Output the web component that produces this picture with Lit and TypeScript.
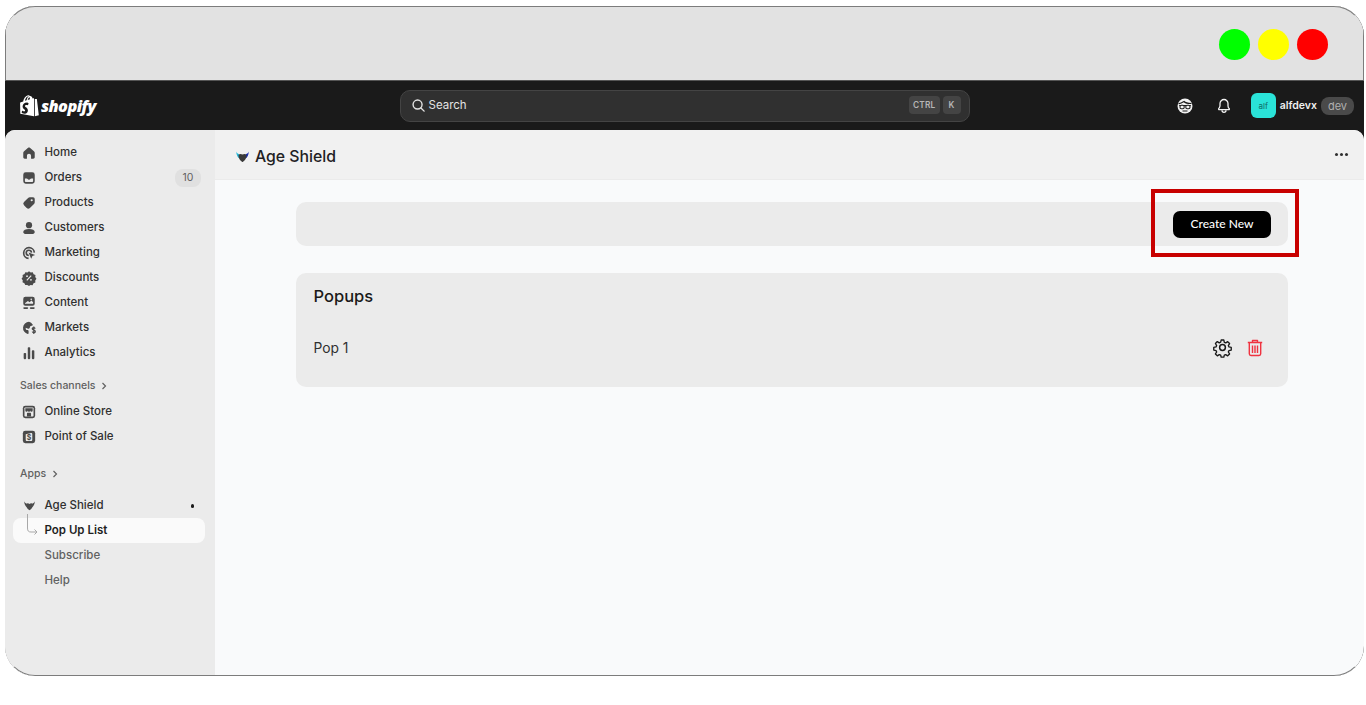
import { LitElement, html, css, svg } from "lit";
import { customElement } from "lit/decorators.js";

const I = "#4a4a4a";
const icons: Record<string, unknown> = {
  home: svg`<path fill="${I}" d="M10 3.200c-.4 0-.8.15-1.100.4L4 7.800c-.6.5-1 1.200-1 2v5.400C3 16.200 3.800 17 4.800 17h2.700v-3.600c0-1.400 1.100-2.500 2.500-2.500s2.500 1.100 2.500 2.500V17h2.700c1 0 1.800-.8 1.800-1.800V9.800c0-.8-.4-1.500-1-2l-4.900-4.200c-.3-.25-.7-.4-1.100-.4z"/>`,
  orders: svg`<path fill="${I}" fill-rule="evenodd" d="M6 3h8a3 3 0 0 1 3 3v8a3 3 0 0 1-3 3H6a3 3 0 0 1-3-3V6a3 3 0 0 1 3-3zM5 10.500V14c0 .6.4 1 1 1h8c.6 0 1-.4 1-1v-3.500h-2.300c-.5 0-.9.300-1.100.7-.2.500-.8.800-1.600.8s-1.400-.3-1.600-.8c-.2-.4-.6-.7-1.100-.7H5z"/>`,
  products: svg`<path fill="${I}" fill-rule="evenodd" d="M11 3h4a2 2 0 0 1 2 2v4c0 .8-.3 1.500-.9 2.100l-5 5a2.800 2.800 0 0 1-3.900 0l-3.300-3.300a2.800 2.800 0 0 1 0-3.900l5-5C9.500 3.300 10.200 3 11 3zM13.300 8a1.300 1.300 0 1 0 0-2.600 1.300 1.300 0 0 0 0 2.600z"/>`,
  customers: svg`<circle cx="10" cy="6.500" r="3.800" fill="${I}"/><path fill="${I}" d="M3 15c0-2.200 2.800-3.700 7-3.700s7 1.500 7 3.700c0 1.300-1 2.300-2.300 2.300H5.300C4 17.300 3 16.300 3 15z"/>`,
  marketing: svg`<g fill="none" stroke="${I}" stroke-width="2"><path d="M9.500 16.500a6.500 6.500 0 1 1 7-7"/><path d="M9.800 13a3.200 3.200 0 1 1 3.200-3.400"/></g><path fill="${I}" d="M9.500 9.500l8 2.800-3.300 1.500-1.500 3.300z"/>`,
  discounts: svg`<path fill="${I}" d="M10 1.800l2.100 1.500 2.500-.3 1 2.300 2.300 1.100-.3 2.500 1.500 1.900-1.500 2.100.2 2.500-2.300 1-1.100 2.300-2.500-.3-1.900 1.500-2.100-1.500-2.500.2-1-2.300-2.300-1.100.3-2.500-1.500-1.900 1.500-2.100-.2-2.500 2.300-1 1.100-2.300 2.500.3z"/><path stroke="#ebebeb" stroke-width="1.400" d="M7.300 13l5.400-6"/><circle cx="7.600" cy="7.800" r="1.100" fill="#ebebeb"/><circle cx="12.400" cy="12.200" r="1.100" fill="#ebebeb"/>`,
  content: svg`<path fill="${I}" fill-rule="evenodd" d="M5.500 2.500h9A2.500 2.500 0 0 1 17 5v6a2.500 2.500 0 0 1-2.500 2.500h-9A2.500 2.500 0 0 1 3 11V5a2.500 2.500 0 0 1 2.500-2.500zM5 10.300c0 .4.300.7.700.7h8.600c.4 0 .7-.3.700-.7V9l-2-2-2.300 2-2-1.500z"/><circle cx="12.700" cy="5.500" r="1" fill="#ebebeb"/><rect x="3" y="15.200" width="6" height="2" rx="1" fill="${I}"/><rect x="11" y="15.200" width="6" height="2" rx="1" fill="${I}"/>`,
  markets: svg`<path fill="${I}" d="M10 2.500a7.500 7.500 0 0 0-1.500 14.800c.6.100 1-.3 1-.8V14c0-.8-.7-1.500-1.500-1.500-1.100 0-2-.9-2-2V9.800l3 1c1 .3 2-.3 2-1.300 0-.8.5-1.500 1.200-1.800l2-.9c.4-.2.600-.7.300-1.100A7.500 7.500 0 0 0 10 2.500z"/><path fill="none" stroke="${I}" stroke-width="1.500" d="M17.500 10.800c-.3-.8-1-1.300-1.800-1.300-1 0-1.800.6-1.800 1.500 0 2 3.800 1.200 3.800 3.200 0 .9-.9 1.500-1.900 1.500-.9 0-1.600-.5-1.900-1.300M15.800 8.300v9"/>`,
  analytics: svg`<rect x="3.500" y="10" width="3" height="7.500" rx="1" fill="${I}"/><rect x="8.500" y="3" width="3" height="14.500" rx="1" fill="${I}"/><rect x="13.500" y="6.500" width="3" height="11" rx="1" fill="${I}"/>`,
  store: svg`<rect x="2.500" y="2.500" width="15" height="15" rx="3" fill="${I}"/><rect x="4.500" y="4.500" width="11" height="11" rx="1" fill="#ebebeb"/><path fill="${I}" d="M5.500 5.500h9v2.800a1.500 1.500 0 0 1-3 0 1.500 1.500 0 0 1-3 0 1.500 1.500 0 0 1-3 0z"/><path fill="${I}" d="M7.500 15.500v-3.500a1 1 0 0 1 1-1h3a1 1 0 0 1 1 1v3.500z"/>`,
  pos: svg`<rect x="2.500" y="2.500" width="15" height="15" rx="3" fill="${I}"/><path fill="#ebebeb" d="M6 6.500l6.500-1.500c1 0 1.500.5 1.500 1.500v7c0 1-.5 1.500-1.500 1.500h-5C6.500 15 6 14.500 6 13.500z"/><text x="10" y="13.400" text-anchor="middle" font-size="8.500" font-weight="700" font-family="Inter" fill="${I}">$</text>`,
};

const navIcon = (k: string) => html`<svg class="ni" viewBox="0 0 20 20">${icons[k]}</svg>`;
const shield = (l: string, r: string, c: string) => html`<svg viewBox="0 0 14 12" class="sh">
  <path fill="${l}" d="M.300 .300C.800 1.800 1.800 2.800 3.500 3.300L3.800 8C1.500 6.500 .300 3.800 .300 .300z"/>
  <path fill="${r}" d="M13.700 .300C13.200 1.800 12.200 2.800 10.500 3.300L10.200 8c2.300-1.500 3.500-4.200 3.500-7.700z"/>
  <path fill="${c}" d="M7 3.700C8.500 2.500 10.500 2.800 11.300 4c.3 3.500-1.600 6.300-4.300 7.800C4.300 10.300 2.400 7.500 2.700 4 3.500 2.800 5.500 2.500 7 3.700z"/></svg>`;
const chevron = html`<svg width="8" height="8" viewBox="0 0 8 8" fill="none" stroke="#616161" stroke-width="1.200"><path d="M2.500 1l3 3-3 3"/></svg>`;

@customElement("app-root")
export class AppRoot extends LitElement {
  static styles = css`
    :host { display: block; position: relative; height: 705px; background: #fff; font-family: Inter, "Liberation Sans", sans-serif; overflow: hidden; }
    svg { display: block; flex: none; }
    .frame { position: absolute; left: 5px; top: 6px; width: 1359px; height: 670px; border-radius: 30px; overflow: hidden; display: flex; flex-direction: column; background: #1a1a1a; }
    .frame::after { content: ""; position: absolute; inset: 0; box-sizing: border-box; border: 1px solid #7c7c7c; border-left-color: transparent; border-right-color: transparent; border-radius: 30px; pointer-events: none; }
    .chrome { height: 75px; box-sizing: border-box; flex: none; background: #e2e2e2; display: flex; align-items: center; justify-content: flex-end; gap: 8px; padding: 3px 35px 0 0; border: 1px solid #7c7c7c; border-width: 0 1px 1px; border-bottom-color: #555; }
    .dot { width: 31px; height: 31px; border-radius: 50%; }
    .top { height: 49px; flex: none; display: grid; grid-template-columns: 1fr 570px 1fr; align-items: center; background: #1a1a1a; }
    .logo { display: flex; align-items: center; gap: 2px; padding-left: 15px; color: #fff; }
    .logo span { font: italic 800 16.300px "Open Sans", sans-serif; letter-spacing: -0.6px; }
    .search { height: 32px; box-sizing: border-box; background: #303030; border: 1px solid #444; border-radius: 10px; display: flex; align-items: center; padding: 0 8px 1px 10px; color: #e3e3e3; font-size: 11.500px; gap: 3px; }
    .grow { flex: 1; }
    .kbd { background: #444; color: #b5b5b5; font-size: 8.300px; font-weight: 600; height: 18px; border-radius: 4px; padding: 0 4px; display: flex; align-items: center; letter-spacing: .2px; }
    .kbd.k { width: 18px; box-sizing: border-box; justify-content: center; padding: 0; }
    .right { display: flex; justify-content: flex-end; align-items: center; color: #fff; padding-right: 10px; }
    .avatar { width: 25px; height: 25px; background: #2ae3d8; border-radius: 6px; color: #0e6a66; font-size: 8px; display: flex; align-items: center; justify-content: center; margin-left: 19px; }
    .user { font-size: 10.500px; font-weight: 600; margin: 0 4px; color: #f0f0f0; }
    .env { background: #4a4a4a; color: #b0b0b0; font-size: 11px; height: 18px; width: 33px; border-radius: 8px; display: flex; align-items: center; justify-content: center; }
    .bell { margin-left: 23px; }
    .body { flex: 1; display: flex; min-height: 0; border-radius: 10px 10px 0 0; overflow: hidden; background: #f9fafb; }
    .side { width: 210px; flex: none; background: #ebebeb; box-sizing: border-box; padding: 10px 10px 0 8px; color: #303030; font-size: 11.500px; font-weight: 500; }
    .item { height: 25px; box-sizing: border-box; padding-bottom: 1px; display: flex; align-items: center; border-radius: 8px; position: relative; padding-left: 6px; }
    .ni { width: 20px; height: 20px; margin-right: 5.500px; margin-top: 1px; transform: scale(.82); }
    .item .pad { width: 25.500px; flex: none; display: flex; align-items: center; }
    .badge { margin-left: auto; margin-right: 4px; margin-top: 1px; width: 26px; height: 18px; background: #e0e0e0; border-radius: 8px; font-size: 10.500px; color: #616161; display: flex; align-items: center; justify-content: center; font-weight: 400; }
    .sec { height: 25px; display: flex; align-items: center; gap: 5px; color: #616161; font-size: 10.500px; padding-left: 7px; font-weight: 500; }
    .s1 { margin-top: 8px; margin-bottom: 1px; }
    .s2 { margin-top: 12px; margin-bottom: 7px; }
    .sel { background: #fafafa; font-weight: 600; color: #1f1f1f; }
    .sub { color: #616161; }
    .sh { width: 13px; height: 11.500px; }
    .side .sh { width: 11px; height: 9.500px; margin-left: 5px; margin-top: 2px; }
    .pin { width: 3.500px; height: 3.500px; background: #1a1a1a; border-radius: 50%; margin-left: auto; margin-right: 11px; margin-top: 2px; }
    .hook { position: absolute; left: 5px; top: -4px; width: 22px; height: 26px; }
    .main { flex: 1; min-width: 0; display: flex; flex-direction: column; }
    .bar { height: 50px; box-sizing: border-box; background: #f1f1f1; border-bottom: 1px solid #ebebeb; display: flex; align-items: center; padding: 4px 16px 0 21px; font-size: 15.800px; font-weight: 500; color: #1f2124; gap: 6px; flex: none; }
    .more { margin-left: auto; display: flex; gap: 2px; margin-top: -4px; }
    .more i { width: 3px; height: 3px; border-radius: 50%; background: #303030; }
    .cnt { padding: 22px 76px 0 81px; display: flex; flex-direction: column; gap: 27px; }
    .card { background: #ebebeb; border-radius: 10px; }
    .act { height: 44px; display: flex; align-items: center; justify-content: flex-end; padding-right: 17px; }
    .btn { width: 98px; height: 27px; background: #000; color: #fff; border: 0; border-radius: 7px; font: 500 12px Lato, sans-serif; padding: 0 0 2px; }
    .pops { height: 114px; box-sizing: border-box; padding: 12px 23.500px 0 17.500px; }
    .pops h2 { margin: 0; font-size: 16.500px; font-weight: 500; color: #1a1a1a; line-height: 22px; }
    .row { display: flex; align-items: center; height: 30px; margin-top: 26px; font-size: 13.800px; color: #303030; gap: 12px; }
    .row span { margin-right: auto; }
    .row svg { margin-top: -1px; }
    .mark { position: absolute; left: 1151px; top: 189px; width: 148px; height: 68px; box-sizing: border-box; border: 4px solid #c80000; pointer-events: none; }
  `;

  private nav(k: string, t: string, extra?: unknown) {
    return html`<div class="item">${navIcon(k)}<span>${t}</span>${extra ?? ""}</div>`;
  }

  render() {
    return html`
      <div class="frame">
        <div class="chrome">
          <div class="dot" style="background:#0f0"></div>
          <div class="dot" style="background:#ff0"></div>
          <div class="dot" style="background:#f00"></div>
        </div>
        <div class="top">
          <div class="logo">
            <svg width="19" height="22" viewBox="0 0 19 22"><path fill="#fff" d="M13.300 3.300l-.7.200C12.200 2.300 11.500 1 10.100 1h-.2C9.500.500 9 .3 8.600.3 5.300.3 3.700 4.400 3.200 6.500l-2.300.7c-.7.200-.7.200-.8.900L.3 18.700 14 21.300V3.200c-.3 0-.5 0-.7.100zM9.900 4.300L7.700 5c.4-1.600 1.200-2.400 1.900-2.700.2.500.3 1.100.3 2zM8.600 1.200c.1 0 .3 0 .4.100-1 .5-2 1.600-2.400 3.900l-1.700.5C5.300 4.200 6.400 1.200 8.600 1.200zM14.800 21.200l4-1-1.900-15.900c0-.1-.1-.2-.2-.2l-1.900-.1z"/><path fill="#1a1a1a" d="M8.600 8.200l-.7 2.200s-.7-.4-1.600-.4c-1.300 0-1.400.8-1.400 1 0 1.100 3 1.600 3 4.300 0 2.100-1.300 3.400-3.100 3.400-2.100 0-3.200-1.300-3.200-1.300l.6-1.900s1.100.9 2 .9c.6 0 .9-.5.900-.8 0-1.500-2.500-1.600-2.500-4.100 0-2.100 1.500-4.100 4.500-4.100 1.200 0 1.500.8 1.500.8z"/></svg>
            <span>shopify</span>
          </div>
          <div class="search">
            <svg width="15" height="15" viewBox="0 0 16 16" fill="none" stroke="#e3e3e3" stroke-width="1.500" stroke-linecap="round"><circle cx="7" cy="7" r="4.800"/><path d="M10.600 10.600L14 14"/></svg>
            <span>Search</span><span class="grow"></span>
            <span class="kbd">CTRL</span><span class="kbd k">K</span>
          </div>
          <div class="right">
            <svg width="16" height="16" viewBox="0 0 16 16"><circle cx="8" cy="8" r="7.500" fill="#f2f2f2"/><path d="M1.500 5.500C4 5.800 5.500 4.500 7 3.500c1 1.200 4 2 7.500 2" stroke="#1a1a1a" stroke-width="1.200" fill="none"/><rect x="2.200" y="7" width="11.600" height="1.100" fill="#1a1a1a"/><rect x="3" y="7.300" width="4.200" height="3.400" rx="1.400" fill="#f2f2f2" stroke="#1a1a1a" stroke-width="1.100"/><rect x="8.800" y="7.300" width="4.200" height="3.400" rx="1.400" fill="#f2f2f2" stroke="#1a1a1a" stroke-width="1.100"/><path d="M5.500 13h5" stroke="#1a1a1a" stroke-width="1"/></svg>
            <svg class="bell" width="16" height="16" viewBox="0 0 16 16" fill="none" stroke="#f2f2f2" stroke-width="1.300" stroke-linejoin="round"><path d="M8 1.500a4 4 0 0 0-4 4v2.300c0 1-.5 1.900-1.300 2.900-.3.500 0 1 .6 1h9.400c.6 0 .9-.5.600-1C12 9.700 12 8.800 12 7.800V5.500a4 4 0 0 0-4-4z"/><path d="M6 12.300a2 2 0 0 0 4 0"/></svg>
            <div class="avatar">alf</div>
            <span class="user">alfdevx</span>
            <span class="env">dev</span>
          </div>
        </div>
        <div class="body">
          <nav class="side">
            ${this.nav("home", "Home")}
            ${this.nav("orders", "Orders", html`<span class="badge">10</span>`)}
            ${this.nav("products", "Products")}
            ${this.nav("customers", "Customers")}
            ${this.nav("marketing", "Marketing")}
            ${this.nav("discounts", "Discounts")}
            ${this.nav("content", "Content")}
            ${this.nav("markets", "Markets")}
            ${this.nav("analytics", "Analytics")}
            <div class="sec s1">Sales channels ${chevron}</div>
            ${this.nav("store", "Online Store")}
            ${this.nav("pos", "Point of Sale")}
            <div class="sec s2">Apps ${chevron}</div>
            <div class="item"><span class="pad">${shield("#4a4a4a", "#4a4a4a", "#4a4a4a")}</span><span>Age Shield</span><span class="pin"></span></div>
            <div class="item sel"><span class="pad"></span><span>Pop Up List</span>
              <svg class="hook" viewBox="0 0 22 26" fill="none" stroke="#a8a8a8" stroke-width="1"><path d="M9.500 0v14c0 3 1 4 3.500 4h6M16.500 15.500l2.500 2.500-2.500 2.500"/></svg>
            </div>
            <div class="item sub"><span class="pad"></span><span>Subscribe</span></div>
            <div class="item sub"><span class="pad"></span><span>Help</span></div>
          </nav>
          <main class="main">
            <div class="bar">${shield("#27b8d8", "#1a2fb0", "#3a3a3a")}<span>Age Shield</span>
              <span class="more"><i></i><i></i><i></i></span></div>
            <div class="cnt">
              <section class="card act"><button class="btn">Create New</button></section>
              <section class="card pops">
                <h2>Popups</h2>
                <div class="row">
                  <span>Pop 1</span>
                  <svg width="21" height="21" viewBox="0 0 24 24" fill="none" stroke="#1a1a1a" stroke-width="1.700" stroke-linejoin="round"><path d="M10.300 2.500h3.400l.6 2.900 1.800.8 2.500-1.600 2.400 2.400-1.600 2.500.8 1.800 2.900.6v3.400l-2.900.6-.8 1.800 1.600 2.500-2.400 2.400-2.500-1.600-1.800.8-.6 2.500h-3.400l-.6-2.500-1.800-.8-2.500 1.600-2.400-2.400 1.600-2.500-.8-1.800-2.900-.6v-3.400l2.900-.6.8-1.800L3 6.900l2.400-2.400 2.500 1.600 1.800-.8z" transform="translate(1.200 1.200) scale(.9)"/><circle cx="12" cy="12" r="3.300"/></svg>
                  <svg width="20" height="20" viewBox="0 0 20 20" fill="none" stroke="#ef3340" stroke-width="1.400" stroke-linejoin="round"><path d="M2.800 4.500h14.400M7.500 4.500V2.500h5v2M4.300 4.500v11.300c0 1 .7 1.700 1.700 1.700h8c1 0 1.700-.7 1.700-1.700V4.500M7.500 7.500v7.500M10 7.500v7.500M12.500 7.500v7.500"/></svg>
                </div>
              </section>
            </div>
          </main>
        </div>
      </div>
      <div class="mark"></div>
    `;
  }
}
